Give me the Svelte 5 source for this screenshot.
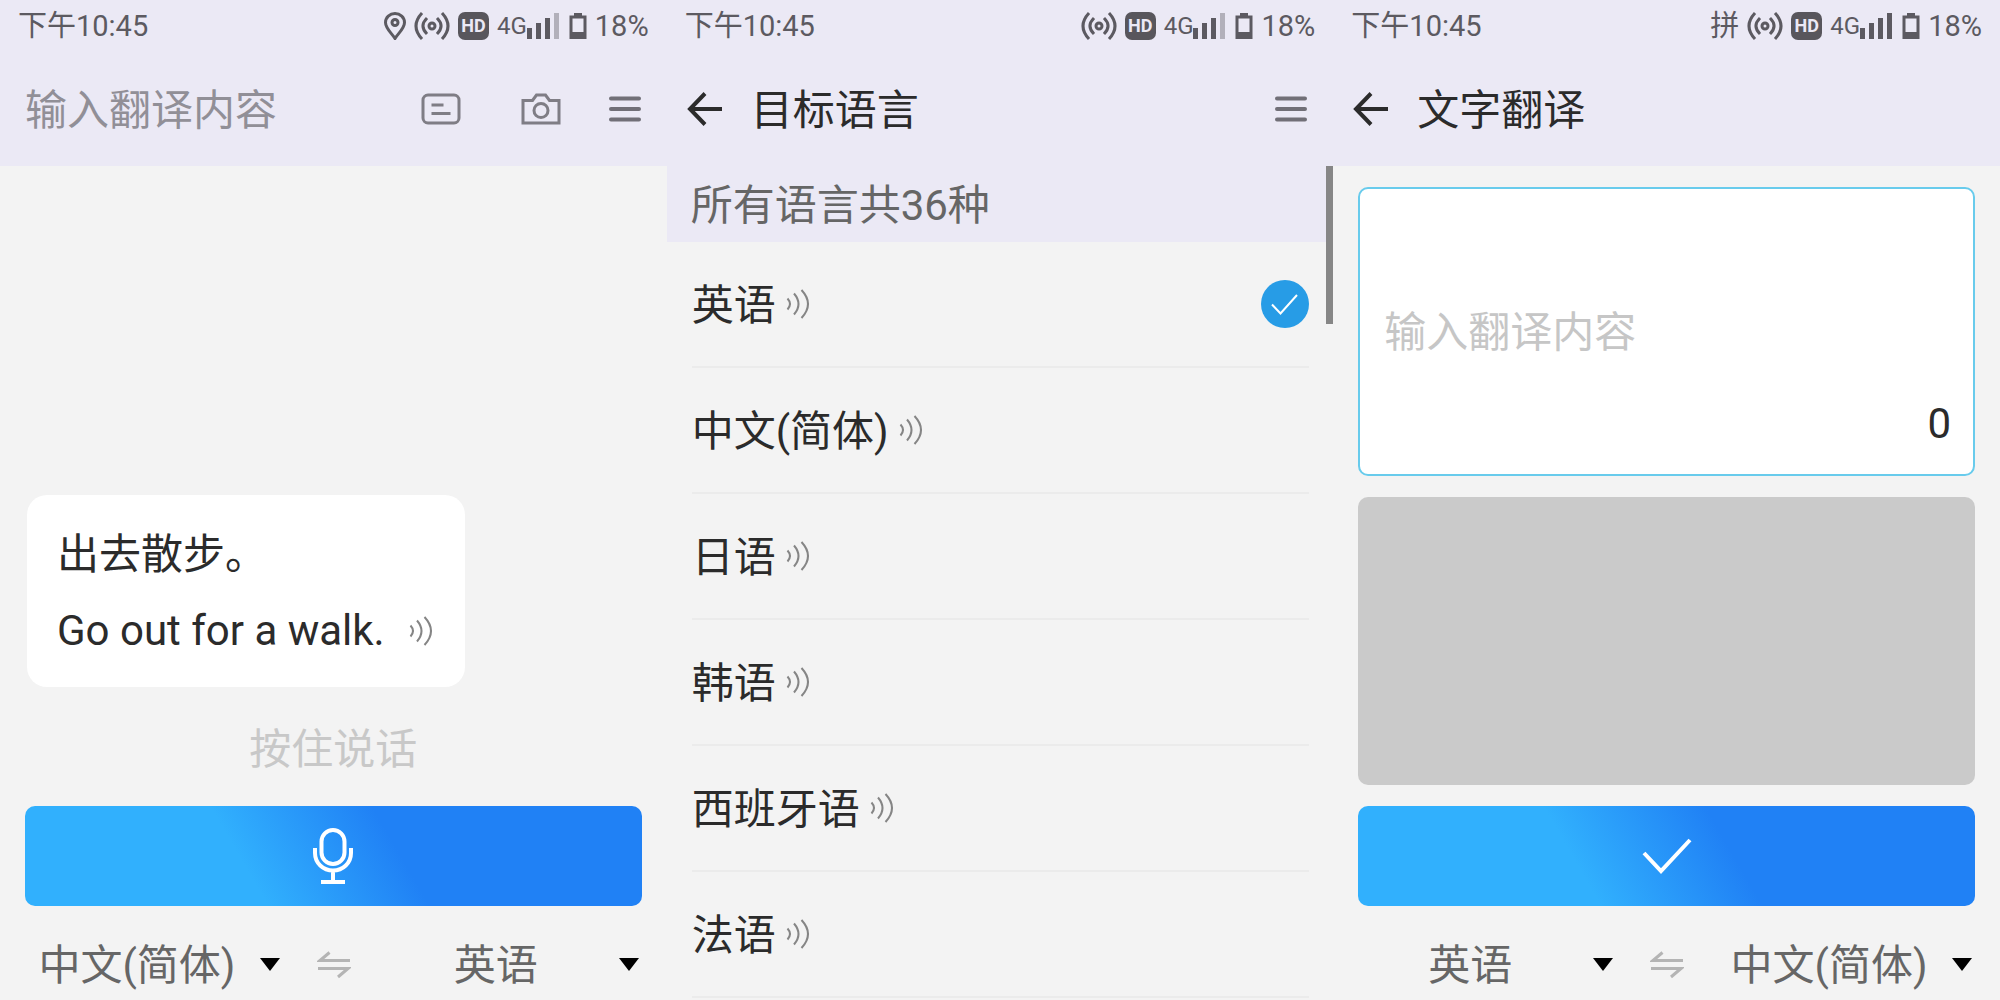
<script>
  const languages = ["英语", "中文(简体)", "日语", "韩语", "西班牙语", "法语"];
  const maxBars = 4;

  let query = $state("");
  let text = $state("");
  let target = $state("英语");
  let voice = $state({ from: "中文(简体)", to: "英语" });
  let written = $state({ from: "英语", to: "中文(简体)" });

  function swap(pair) {
    const from = pair.from;
    pair.from = pair.to;
    pair.to = from;
  }
</script>

{#snippet statusBar(extra, bars)}
  <div class="status">
    <span class="time">下午10:45</span>
    {#if extra === "pin"}
      <svg class="pin" width="22" height="28" viewBox="0 0 22 28">
        <path d="M11 26.500C8 21.500 1.500 16.500 1.500 10.500a9.500 9 0 0 1 19 0C20.500 16.500 14 21.500 11 26.500z" />
        <circle cx="11" cy="10.500" r="3" />
      </svg>
    {:else if extra}
      <span class="ime">{extra}</span>
    {/if}
    <svg class="hotspot" width="36" height="28" viewBox="0 0 36 28">
      <circle cx="18" cy="14" r="3" />
      <path d="M13 6q-8 8 0 16M23 6q8 8 0 16M8 1q-12 13 0 26M28 1q12 13 0 26" />
    </svg>
    <span class="hd">HD</span>
    <span class="network">4G</span>
    <svg class="bars" width="32" height="28" viewBox="0 0 32 28">
      <rect x="0" y="16" width="5" height="11" />
      <rect x="9" y="11" width="5" height="16" />
      <rect x="18" y="6" width="5" height="21" />
      <rect x="27" y="1" width="5" height="26" class:off={bars < maxBars} />
    </svg>
    <svg class="battery" width="18" height="28" viewBox="0 0 18 28">
      <path class="frame" d="M2 5h14v20.500H2z" />
      <path d="M5 1h8v4H5zM2 20h14v6H2z" />
    </svg>
    <span>18%</span>
  </div>
{/snippet}

{#snippet sound()}
  <svg class="sound" width="24" height="30" viewBox="0 0 24 30">
    <path d="M1.500 9.500q5 5.500 0 11M8 4.500q9 10.500 0 21M15.500 1q13 14 0 28" />
  </svg>
{/snippet}

{#snippet back()}
  <button class="icon back" aria-label="返回">
    <svg width="36" height="34" viewBox="0 0 36 34">
      <path d="M18 1.500L3 17l15 15.500M3 17h32" />
    </svg>
  </button>
{/snippet}

{#snippet menu()}
  <button class="icon menu" aria-label="菜单">
    <svg width="32" height="28" viewBox="0 0 32 28">
      <path d="M2 3.500h28M2 14h28M2 24.500h28" />
    </svg>
  </button>
{/snippet}

{#snippet picker(pair, side, label)}
  <label class="picker">
    <select bind:value={pair[side]} aria-label={label}>
      {#each languages as language}
        <option value={language}>{language}</option>
      {/each}
    </select>
    <svg width="20" height="14" viewBox="0 0 20 14"><path d="M0 0h20L10 13z" /></svg>
  </label>
{/snippet}

{#snippet languageBar(pair)}
  <div class="language-bar">
    {@render picker(pair, "from", "源语言")}
    <button class="icon swap" aria-label="交换" onclick={() => swap(pair)}>
      <svg width="34" height="28" viewBox="0 0 34 28">
        <path d="M12.500 1.500L3 9.500h30M1 17.500h30L21 26" />
      </svg>
    </button>
    {@render picker(pair, "to", "目标语言")}
  </div>
{/snippet}

<main>
  <section class="screen">
    <header>
      {@render statusBar("pin", 3)}
      <div class="toolbar search">
        <input type="text" placeholder="输入翻译内容" aria-label="输入翻译内容" bind:value={query} />
        <button class="icon" aria-label="文字翻译">
          <svg width="40" height="32" viewBox="0 0 40 32">
            <rect x="2" y="2" width="36" height="28" rx="5" />
            <path d="M10.500 12h12M10.500 20.500h19" />
          </svg>
        </button>
        <button class="icon camera" aria-label="拍照翻译">
          <svg width="40" height="32" viewBox="0 0 40 32">
            <path d="M2 7.500h9.500l4-5.500h9l4 5.500H38V30H2z" />
            <circle cx="20" cy="17.500" r="7" />
          </svg>
        </button>
        {@render menu()}
      </div>
    </header>
    <div class="chat">
      <div class="bubble">
        <p>出去散步。</p>
        <p>Go out for a walk. {@render sound()}</p>
      </div>
      <p class="hint">按住说话</p>
      <button class="action" aria-label="按住说话">
        <svg width="42" height="56" viewBox="0 0 42 56">
          <rect x="9.500" y="2" width="23" height="34" rx="11.500" />
          <path d="M3 20v5c0 10 8 17.500 18 17.500s18-7.500 18-17.500v-5M21 42v11M9 54h24" />
        </svg>
      </button>
    </div>
    {@render languageBar(voice)}
  </section>

  <section class="screen">
    <header>
      {@render statusBar("", 3)}
      <div class="toolbar">
        {@render back()}
        <h1>目标语言</h1>
        {@render menu()}
      </div>
    </header>
    <div class="list">
      <h2>所有语言共36种</h2>
      <ul>
        {#each languages as language}
          <li>
            <button onclick={() => (target = language)}>
              <span class="name">{language}</span>
              {@render sound()}
              {#if language === target}
                <svg class="chosen" width="48" height="48" viewBox="0 0 48 48">
                  <circle cx="24" cy="24" r="24" />
                  <path d="M11 24.500l8.500 9L36 15" />
                </svg>
              {/if}
            </button>
          </li>
        {/each}
      </ul>
      <div class="scrollbar"></div>
    </div>
  </section>

  <section class="screen">
    <header>
      {@render statusBar("拼", 4)}
      <div class="toolbar">
        {@render back()}
        <h1>文字翻译</h1>
      </div>
    </header>
    <div class="translate">
      <div class="box">
        <textarea rows="1" placeholder="输入翻译内容" aria-label="输入翻译内容" bind:value={text}></textarea>
        <span class="count">{text.length}</span>
      </div>
      <output class="result"></output>
      <button class="action" aria-label="翻译">
        <svg width="52" height="38" viewBox="0 0 52 38">
          <path d="M3 16l17 18L49 3" />
        </svg>
      </button>
    </div>
    {@render languageBar(written)}
  </section>
</main>

<style>
  :global(body) {
    margin: 0;
  }

  main {
    display: grid;
    grid-template-columns: repeat(3, 1fr);
    min-height: 100vh;
    font-family: Roboto, "Noto Sans CJK SC", sans-serif;
    font-size: 42px;
    line-height: 60px;
    color: #2b2b2b;
    background: #f3f3f3;
  }

  h1,
  h2,
  p,
  ul {
    margin: 0;
    padding: 0;
    font-size: inherit;
    font-weight: 400;
    list-style: none;
  }

  button,
  input,
  textarea,
  select {
    margin: 0;
    padding: 0;
    border: none;
    outline: none;
    background: transparent;
    font: inherit;
    color: inherit;
  }

  svg {
    display: block;
    flex: none;
    fill: none;
    stroke: currentColor;
  }

  .screen {
    display: flex;
    flex-direction: column;
    min-width: 0;
  }

  header {
    background: #ebe9f5;
  }

  /* status bar */
  .status {
    display: flex;
    align-items: center;
    height: 52px;
    padding: 0 18px;
    font-size: 29px;
    line-height: 40px;
    color: #5c5a61;
  }

  .status svg {
    stroke-width: 3;
  }

  .time {
    margin-right: auto;
  }

  .pin,
  .ime {
    margin-right: 8px;
  }

  .hd {
    margin: 0 8px;
    width: 31px;
    border-radius: 7px;
    background: #58565c;
    color: #ebe9f5;
    font-size: 18px;
    font-weight: 700;
    line-height: 28px;
    text-align: center;
  }

  .network {
    font-size: 24px;
  }

  .status .bars {
    margin-right: 10px;
    fill: currentColor;
    stroke: none;
  }

  .bars .off {
    opacity: 0.4;
  }

  .status .battery {
    margin-right: 8px;
    fill: currentColor;
    stroke: none;
  }

  .battery .frame {
    fill: none;
    stroke: currentColor;
  }

  /* toolbar */
  .toolbar {
    display: flex;
    align-items: center;
    height: 114px;
    padding: 0 26px 0 20px;
  }

  .search {
    padding-left: 25px;
    color: #7f7d85;
  }

  .search input {
    flex: 1;
    min-width: 0;
    padding-top: 4px;
  }

  .search input::placeholder {
    color: #918f97;
    opacity: 1;
  }

  .icon {
    display: flex;
    stroke-width: 3;
    cursor: pointer;
  }

  .camera {
    margin: 0 48px 0 60px;
  }

  .back {
    margin-right: 28px;
    stroke-width: 4;
  }

  h1,
  .name {
    padding-top: 4px;
  }

  .menu {
    margin-left: auto;
    color: #716f77;
    stroke-width: 4;
    stroke-linecap: round;
  }

  /* voice screen */
  .chat {
    display: flex;
    flex: 1;
    flex-direction: column;
    justify-content: flex-end;
    padding: 0 25px;
  }

  .bubble {
    align-self: flex-start;
    display: flex;
    flex-direction: column;
    gap: 16px;
    margin-left: 2px;
    padding: 30px 32px 26px 30px;
    border-radius: 20px;
    background: #fff;
  }

  .bubble p {
    display: flex;
    align-items: center;
    gap: 24px;
  }

  .sound {
    color: #858585;
    stroke-width: 2;
  }

  .hint {
    padding: 33px 0 26px;
    color: #c8c8c8;
    text-align: center;
  }

  .action {
    display: flex;
    align-items: center;
    justify-content: center;
    height: 100px;
    border-radius: 10px;
    background: linear-gradient(60deg, #31b0fd 36%, #2081f5 60%);
    color: #fff;
    stroke-width: 4;
    cursor: pointer;
  }

  /* language pickers */
  .language-bar {
    display: flex;
    align-items: center;
    padding: 24px 28px 0 14px;
    height: 70px;
    color: #666;
  }

  .picker {
    display: flex;
    flex: 1;
    align-items: center;
    min-width: 0;
  }

  .picker select {
    flex: 1;
    min-width: 0;
    height: 62px;
    padding-top: 2px;
    appearance: none;
    text-align: center;
    text-align-last: center;
  }

  .picker svg {
    fill: #000;
    stroke: none;
  }

  .swap {
    margin: 0 22px 0 37px;
    color: #b4b4b4;
  }

  /* language list */
  .list {
    position: relative;
    padding-right: 7px;
  }

  h2 {
    padding: 10px 24px 6px;
    background: #ebe9f5;
    color: #666;
  }

  li {
    margin: 0 17px 0 25px;
    border-bottom: 2px solid #ebebeb;
  }

  li button {
    display: flex;
    align-items: center;
    gap: 10px;
    width: 100%;
    height: 124px;
    cursor: pointer;
  }

  .chosen {
    margin-left: auto;
    stroke: #fff;
    stroke-width: 2;
  }

  .chosen circle {
    fill: #279ce6;
    stroke: none;
  }

  .scrollbar {
    position: absolute;
    top: 0;
    right: 0;
    width: 7px;
    height: 158px;
    background: #868686;
  }

  /* text screen */
  .translate {
    display: grid;
    flex: 1;
    grid-template-rows: 1fr 1fr auto;
    gap: 21px;
    padding: 21px 25px 0;
  }

  .box,
  .result {
    border-radius: 10px;
  }

  .box {
    position: relative;
    display: flex;
    align-items: center;
    padding: 0 24px;
    border: 2px solid #68cbec;
    background: #fff;
  }

  .box textarea {
    width: 100%;
    padding-top: 4px;
    resize: none;
    overflow: hidden;
  }

  .box textarea::placeholder {
    color: #c6c6c6;
    opacity: 1;
  }

  .count {
    position: absolute;
    right: 22px;
    bottom: 20px;
  }

  .result {
    background: #cacaca;
  }
</style>
